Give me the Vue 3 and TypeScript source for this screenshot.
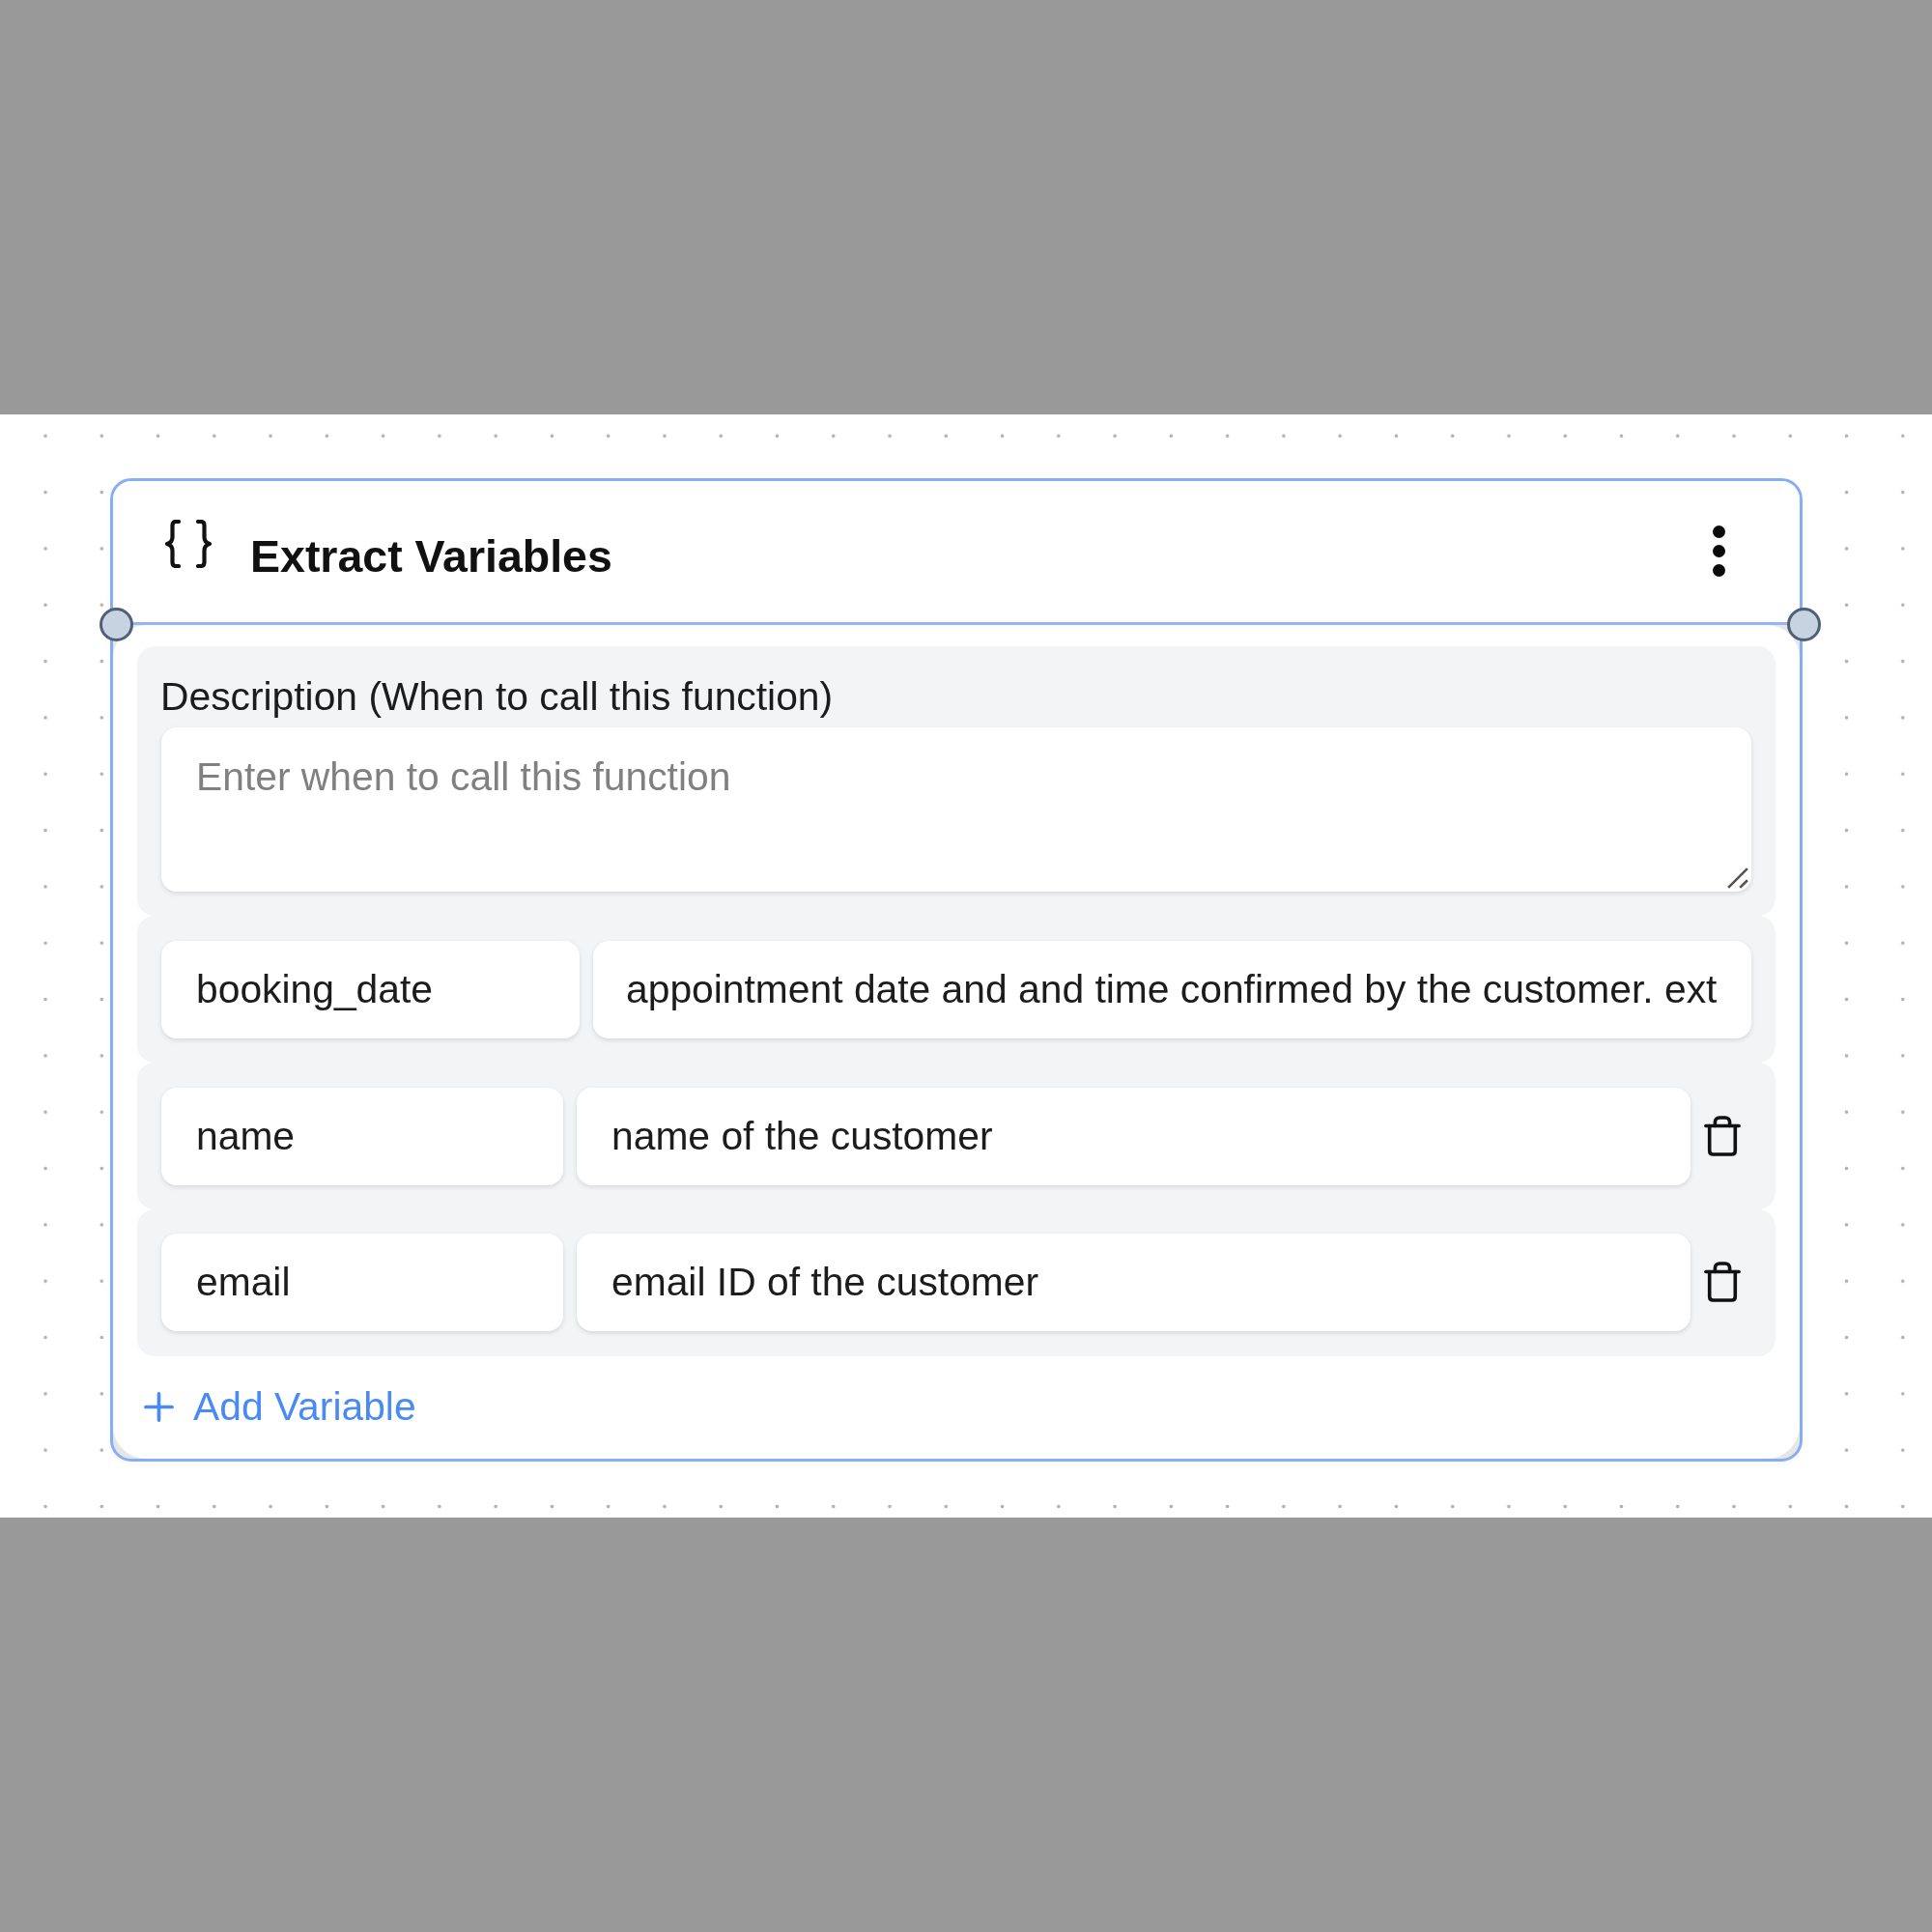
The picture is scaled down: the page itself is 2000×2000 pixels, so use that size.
<script setup lang="ts">
interface Variable {
  key: string;
  value: string;
  removable: boolean;
}

const variables: Variable[] = [
  { key: 'booking_date', value: 'appointment date and and time confirmed by the customer. ext', removable: false },
  { key: 'name', value: 'name of the customer', removable: true },
  { key: 'email', value: 'email ID of the customer', removable: true }
];
</script>

<template>
  <div class="page">
    <div class="band"></div>
    <div class="canvas">
      <div class="node">
        <span class="handle handle-left"></span>
        <span class="handle handle-right"></span>
        <div class="node-header">
          <svg class="braces" viewBox="0 0 50 50" fill="none" stroke="#111" stroke-width="4.200" stroke-linecap="round" stroke-linejoin="round">
            <path d="M15 2H12C9.500 2 8.500 3.500 8.500 6V18C8.500 21.500 6.500 24 3 25C6.500 26 8.500 28.500 8.500 32V44C8.500 46.500 9.500 48 12 48H15" />
            <path d="M35 2H38C40.500 2 41.500 3.500 41.500 6V18C41.500 21.500 43.500 24 47 25C43.500 26 41.500 28.500 41.500 32V44C41.500 46.500 40.500 48 38 48H35" />
          </svg>
          <h2 class="title">Extract Variables</h2>
          <div class="menu">
            <span></span>
            <span></span>
            <span></span>
          </div>
        </div>
        <div class="node-body">
          <div class="panel panel-description">
            <div class="label">Description (When to call this function)</div>
            <div class="field textarea">
              <span class="placeholder">Enter when to call this function</span>
              <svg class="resizer" viewBox="0 0 20 20" fill="none" stroke="#555" stroke-width="2.400">
                <path d="M1 19L19 1" />
                <path d="M12 19L19 12" />
              </svg>
            </div>
          </div>
          <div v-for="item in variables" :key="item.key" class="panel row">
            <div class="field key" :class="{ wide: !item.removable }">{{ item.key }}</div>
            <div class="field value">{{ item.value }}</div>
            <div v-if="item.removable" class="trash">
              <svg viewBox="0 0 40 44" fill="none" stroke="#111" stroke-width="3.800" stroke-linecap="round" stroke-linejoin="round">
                <path d="M2 11H38" />
                <path d="M6 11V38C6 40.500 7.500 42 10 42H30C32.500 42 34 40.500 34 38V11" />
                <path d="M12 11V7C12 4 14 2 17 2H23C26 2 28 4 28 7V11" />
              </svg>
            </div>
          </div>
          <div class="add">
            <svg viewBox="0 0 32 32" fill="none" stroke="#4a8af4" stroke-width="3.800" stroke-linecap="round">
              <path d="M16 2V30" />
              <path d="M2 16H30" />
            </svg>
            <span>Add Variable</span>
          </div>
        </div>
      </div>
    </div>
    <div class="band"></div>
  </div>
</template>

<style scoped>
.page {
  width: 2000px;
  height: 2000px;
  display: flex;
  flex-direction: column;
  font-family: "Liberation Sans", Arial, sans-serif;
  color: #1c1c1c;
}

.band {
  height: 429px;
  background: #999999;
}

.canvas {
  height: 1142px;
  padding: 66px 0 0 114px;
  box-sizing: border-box;
  background-color: #fff;
  background-image: radial-gradient(circle at center, #b2b2b2 0, #b2b2b2 1.500px, transparent 2.200px);
  background-size: 58.280px 58.330px;
  background-position: 17.900px -6.900px;
  filter: blur(0.6px);
}

.node {
  position: relative;
  width: 1752px;
  height: 1018px;
  box-sizing: border-box;
  border: 3px solid #85aef6;
  border-radius: 22px;
  background: #e6e6e6;
  display: flex;
  flex-direction: column;
  box-shadow: 0 2px 6px rgba(0, 0, 0, 0.04);
}

.handle {
  position: absolute;
  top: 131px;
  width: 29px;
  height: 29px;
  border: 3px solid #4f5f75;
  border-radius: 50%;
  background: #c8d3e1;
  z-index: 2;
}

.handle-left {
  left: -14px;
}

.handle-right {
  right: -22px;
}

.node-header {
  height: 149px;
  flex: none;
  box-sizing: border-box;
  border-bottom: 3px solid #94b7f3;
  border-radius: 19px 19px 0 0;
  background: #fff;
  display: flex;
  align-items: flex-start;
  padding-left: 53px;
}

.braces {
  width: 50px;
  height: 50px;
  margin-top: 40px;
  flex: none;
}

.title {
  margin: 53px 0 0 39px;
  font-size: 46.500px;
  line-height: 50px;
  font-weight: 700;
  color: #111;
}

.menu {
  margin: 46px 77px 0 auto;
  display: flex;
  flex-direction: column;
  gap: 7px;
}

.menu span {
  display: block;
  width: 13px;
  height: 13px;
  border-radius: 50%;
  background: #0a0a0a;
}

.node-body {
  flex: 1;
  background: #fff;
  border-radius: 34px;
  padding: 22px 25px 0 25px;
  display: flex;
  flex-direction: column;
}

.panel {
  background: #f3f4f6;
  border-radius: 18px;
  box-sizing: border-box;
}

.panel-description {
  height: 279px;
  padding: 30px 25px 25px;
}

.label {
  font-size: 40.800px;
  line-height: 44px;
  margin: 0 0 10px -1px;
}

.field {
  background: #fff;
  border-radius: 16px;
  box-shadow: 0 2px 5px rgba(0, 0, 0, 0.12);
  box-sizing: border-box;
  font-size: 40.800px;
  line-height: 101px;
  height: 101px;
  padding: 0 34px 0 36px;
  white-space: nowrap;
  overflow: hidden;
}

.textarea {
  position: relative;
  height: 170px;
  line-height: 46px;
  padding-top: 28px;
}

.placeholder {
  color: #808080;
}

.resizer {
  position: absolute;
  right: 3px;
  bottom: 3px;
  width: 22px;
  height: 22px;
}

.row {
  height: 152px;
  padding: 26px 25px 25px;
  display: flex;
  gap: 14px;
}

.row:nth-child(4) {
  padding-top: 25px;
}

.key {
  flex: 0 0 416px;
}

.key.wide {
  flex-basis: 433px;
}

.key.wide + .value {
  padding-left: 34px;
}

.value {
  flex: 1;
  min-width: 0;
}

.trash {
  flex: 0 0 37px;
  margin-right: 11px;
  display: flex;
  align-items: center;
  justify-content: center;
  height: 101px;
}

.trash svg {
  width: 38px;
  height: 42px;
  flex: none;
  margin-top: -2px;
}

.add {
  display: flex;
  align-items: center;
  gap: 20px;
  margin: 29px 0 0 7px;
  color: #4a8af4;
  font-size: 40.800px;
  line-height: 46px;
}

.add svg {
  width: 31px;
  height: 31px;
  flex: none;
}
</style>
